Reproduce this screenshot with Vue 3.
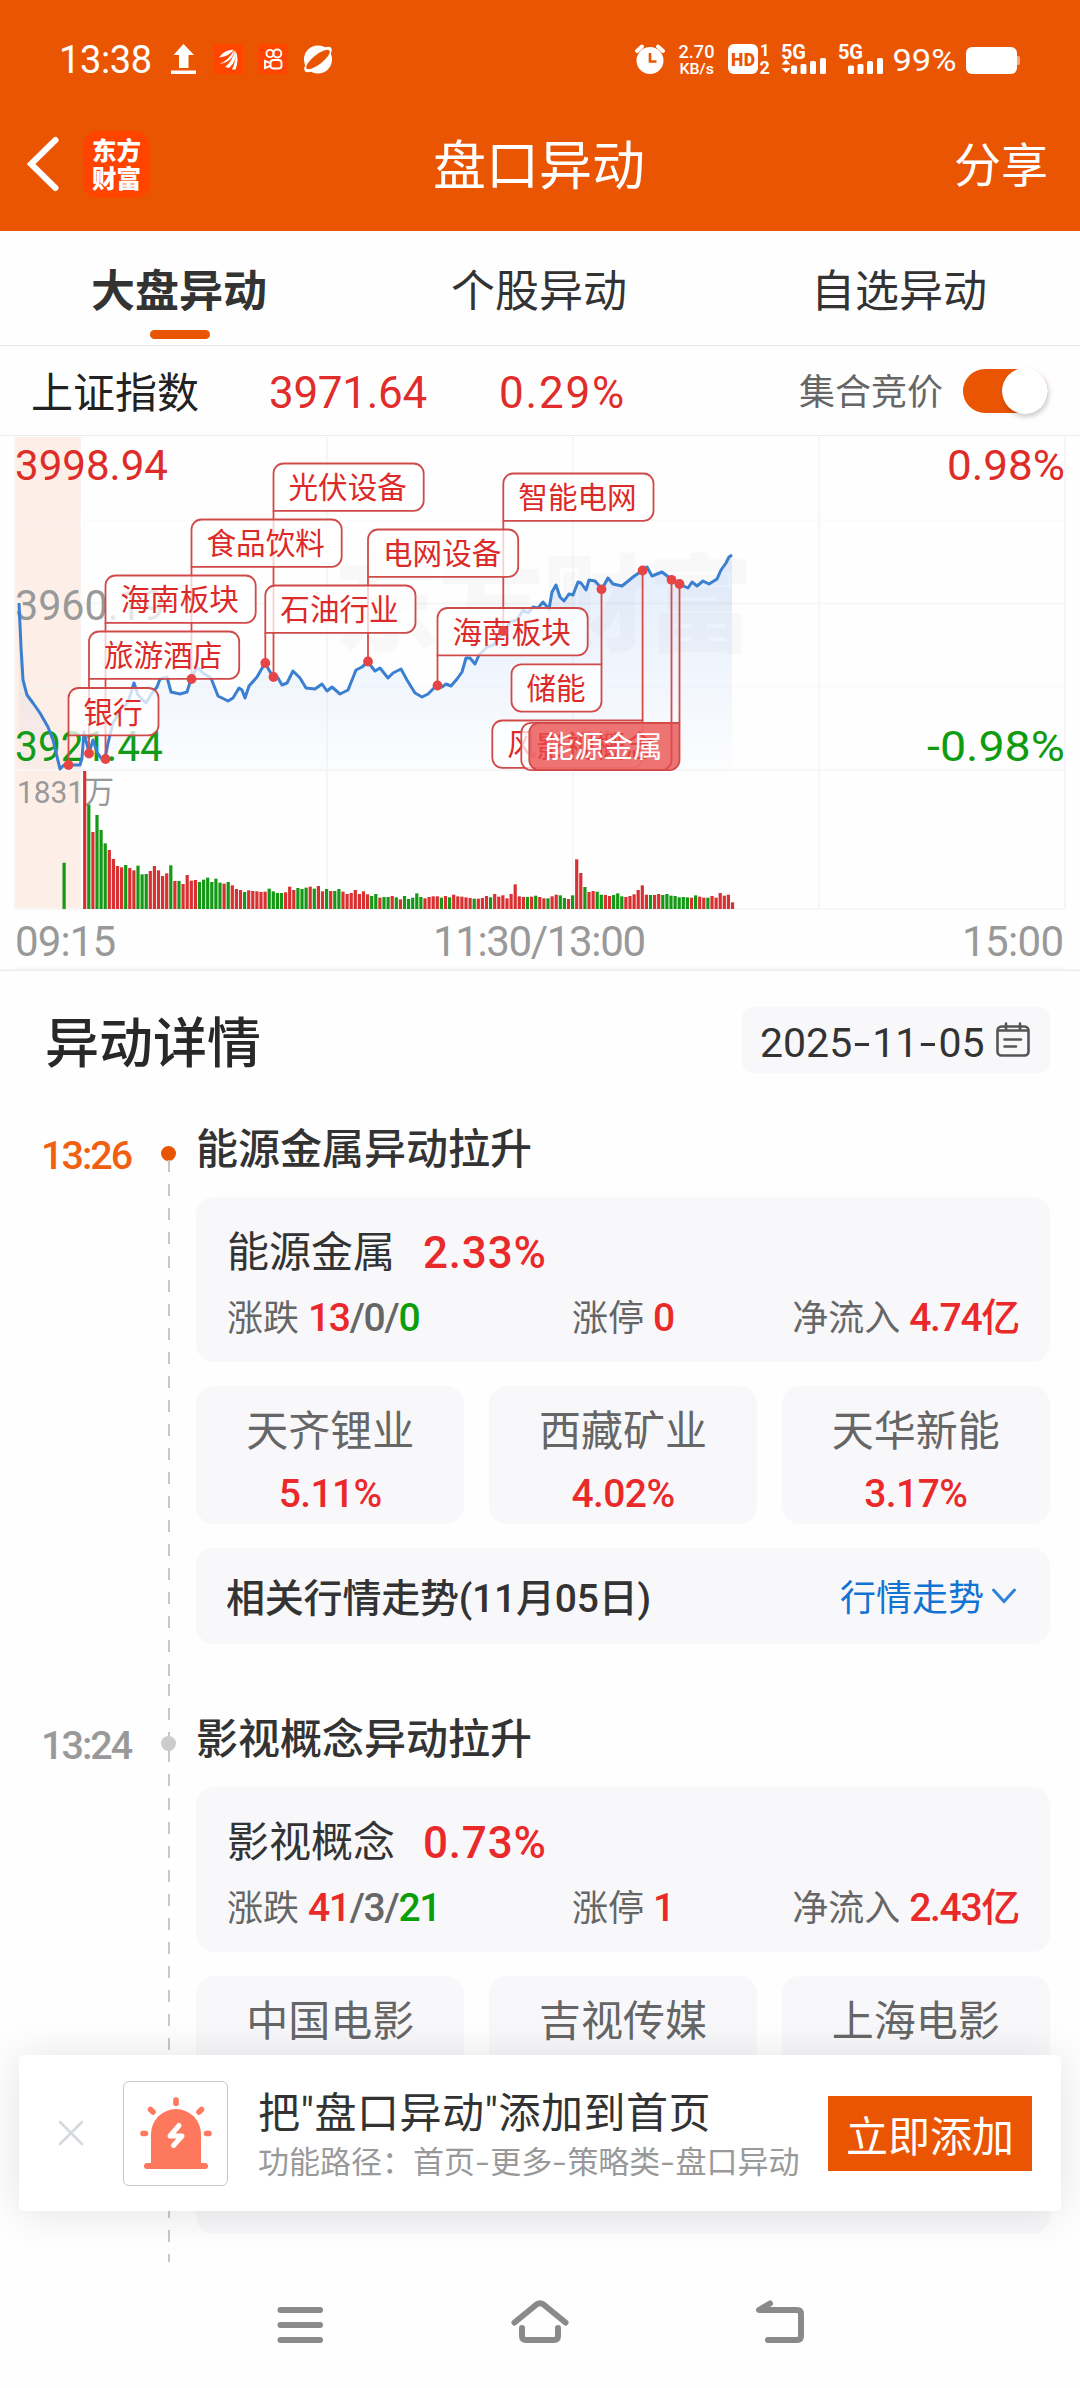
<script setup>
const line = '19,603 21,647 23,680 27,695 33,703 40,713 48,727 53,740 60,769 64,765 68,765 80,765 82,758 84,732 89,753 93,740 97,752 101,758 105,759 108,743 113,723 122,708 128,702 134,683 138,695 146,703 152,693 157,687 160,679 167,677 171,692 180,694 187,692 191,679 197,667 203,673 211,678 218,696 228,701 233,698 239,688 242,690 245,698 249,686 257,677 265,663 273,677 278,678 282,685 287,683 293,671 300,678 306,688 315,689 322,684 327,691 332,687 340,694 348,690 356,670 362,667 368,662 375,671 380,668 388,678 393,673 401,669 407,680 415,693 422,697 428,694 437,685 442,687 446,684 451,686 457,679 462,672 466,658 470,658 475,664 479,655 487,647 493,645 503,633 510,622 517,620 523,610 528,613 533,607 538,608 543,602 549,609 552,592 556,585 560,597 564,601 569,594 573,595 578,582 581,583 586,590 589,580 595,581 602,589 608,578 613,584 622,586 627,582 633,577 643,570 647,567 652,576 662,572 671,579 679,584 688,588 692,582 697,586 703,581 709,584 717,579 721,570 726,563 729,557 732,555'

// Volume series: direction letter + distance (thirds of a pixel) from the panel top
const volume = 'R33 G134 R216 G165 G210 G250 R270 R297 R318 R322 G315 R324 R331 G317 G343 G342 R333 R318 R331 R348 R340 G316 R363 G363 R372 R345 R362 R360 G366 G359 G353 G366 G356 G368 R371 G366 R376 R387 R390 G396 R391 R393 R394 R396 R395 G386 G394 G399 G399 R397 R380 R390 G384 G387 G383 R380 G386 R378 R394 G387 R393 G393 G387 R395 R402 R399 R390 R402 R394 R403 G408 G402 R413 G411 G411 R408 G412 R418 G408 G417 G413 G400 G411 R415 R411 R409 R409 G413 R408 G412 R404 R409 R410 R412 R414 G416 R416 R414 R408 G412 R402 R410 R406 R415 R402 R373 R409 R411 G411 R410 G407 R411 R415 G415 R409 R404 G406 G414 R417 G406 R298 R339 G381 R396 R393 G395 G404 R405 R408 G405 G400 G409 R411 R408 R403 R390 R376 R404 G405 R405 R402 G405 G402 G407 G408 G412 G411 G412 R413 G406 R410 R413 G413 R408 R413 R399 R407 R404 R427'
const bars = volume.split(' ').map((s, i) => ({
  up: s[0] === 'R',
  x: 83.1 + i * 4.1,
  y: 760 + Number(s.slice(1)) / 3,
  h: (447 - Number(s.slice(1))) / 3,
}))

const R = 10
const flags = [
  { t: '光伏设备', x: 273.5, y: 463.5, px: 273.5, py: 677 },
  { t: '食品饮料', x: 191.5, y: 519.5, px: 191.5, py: 679 },
  { t: '海南板块', x: 105.5, y: 575.5, px: 105.5, py: 759 },
  { t: '旅游酒店', x: 89, y: 631.5, px: 89, py: 753.5 },
  { t: '银行', x: 68.5, y: 688, px: 68.5, py: 765 },
  { t: '智能电网', x: 503.3, y: 473.5, px: 503.3, py: 631 },
  { t: '电网设备', x: 368, y: 529.5, px: 368, py: 661.5 },
  { t: '石油行业', x: 265.3, y: 585.5, px: 265.3, py: 663 },
  { t: '海南板块', x: 437.5, y: 608, px: 437.5, py: 685.5 },
  { t: '储能', x: 511.5, y: 664.3, px: 601.5, py: 589.3, right: true },
  { t: '风电设备', x: 492.3, y: 720.5, px: 642.6, py: 570.5, right: true },
  { t: '影视概念', x: 521.3, y: 722.8, px: 671.5, py: 579.8, right: true },
  { t: '能源金属', x: 529.3, y: 722.8, px: 679.5, py: 584, right: true, active: true },
].map((f) => {
  const w = f.t.length === 2 ? 90 : 150.2
  const h = 47.3
  const { x, y } = f
  const box = f.right
    ? `M${x + R} ${y}H${x + w}V${y + h - R}a${R} ${R} 0 0 1 ${-R} ${R}H${x + R}a${R} ${R} 0 0 1 ${-R} ${-R}V${y + R}a${R} ${R} 0 0 1 ${R} ${-R}Z`
    : `M${x + R} ${y}H${x + w - R}a${R} ${R} 0 0 1 ${R} ${R}V${y + h - R}a${R} ${R} 0 0 1 ${-R} ${R}H${x}V${y + R}a${R} ${R} 0 0 1 ${R} ${-R}Z`
  return { ...f, w, h, box }
})

const events = [
  {
    time: '13:26', title: '能源金属异动拉升', sector: '能源金属', pct: '2.33%',
    up: 13, flat: 0, down: 0, limit: 0, inflow: '4.74亿',
    stocks: [['天齐锂业', '5.11%'], ['西藏矿业', '4.02%'], ['天华新能', '3.17%']],
    trend: '相关行情走势(11月05日)', active: true,
  },
  {
    time: '13:24', title: '影视概念异动拉升', sector: '影视概念', pct: '0.73%',
    up: 41, flat: 3, down: 21, limit: 1, inflow: '2.43亿',
    stocks: [['中国电影', ''], ['吉视传媒', ''], ['上海电影', '']],
    trend: '',
  },
]
</script>

<template>
  <div class="page">
    <header class="header">
      <div class="status">
        <span class="clock">13:38</span>
        <svg class="st-icons" width="164" height="32" viewBox="170 43 164 32">
          <path d="M183.500 44l10.500 11h-5.500v13h-9.500V55h-5.500zM171 70.500h25V74h-25z" fill="#fff" />
          <rect x="213" y="44" width="30" height="30" fill="#ff4500" />
          <path d="M219 57.500q5-7.500 14.500-8q-3 6.500-14.500 8zM219.500 64q9.500-4 14.500-14q0 11.500-14.500 14zM225 67q8-6.500 10-17q2.500 11.500-6 18zM232 69.500q4.500-9 3.500-19q4 9 0 19z" fill="#fff" />
          <rect x="258" y="44" width="30" height="30" rx="3" fill="#ff4500" />
          <g fill="none" stroke="#fff" stroke-width="1.900">
            <circle cx="270" cy="53.500" r="3.600" />
            <circle cx="277.300" cy="53.500" r="4" />
            <rect x="270.500" y="60" width="11" height="8.500" rx="3" />
            <path d="M270 63l-5-2v7l5-2" />
          </g>
          <circle cx="318" cy="59.500" r="14" fill="#fff" />
          <ellipse cx="318" cy="59.500" rx="17.500" ry="6.500" transform="rotate(-42 318 59.500)" fill="#fff" />
          <ellipse cx="318" cy="59.500" rx="14.500" ry="4.800" transform="rotate(-38 318 59.500)" fill="#ea5504" />
        </svg>
        <span class="grow"></span>
        <svg class="st-right" width="390" height="34" viewBox="634 42 390 34">
          <circle cx="650" cy="60.500" r="13.500" fill="#fff" />
          <path d="M637 51l5-4.500M663 51l-5-4.500" stroke="#fff" stroke-width="4" stroke-linecap="round" />
          <path d="M650 53v8.500h6.500" fill="none" stroke="#ea5504" stroke-width="2.600" />
          <g fill="#fff">
            <text x="678.500" y="58" font-size="19" textLength="36" lengthAdjust="spacingAndGlyphs" font-weight="500">2.70</text>
            <text x="679.500" y="74" font-size="15.500" textLength="34.500" lengthAdjust="spacingAndGlyphs" font-weight="500">KB/s</text>
            <rect x="728" y="44" width="30" height="30" rx="6" />
            <text x="760" y="56" font-size="16.500" font-weight="700">1</text>
            <text x="759.500" y="74" font-size="18" font-weight="700">2</text>
            <text x="781" y="58.500" font-size="20" textLength="25" font-weight="700">5G</text>
            <text x="838" y="58.500" font-size="20" textLength="25" font-weight="700">5G</text>
            <path d="M786 59.500l4.500 5h-9zM786 73l4.500-5h-9z" />
            <rect x="791" y="65.500" width="6" height="8.500" rx="1.500" />
            <rect x="800.500" y="64" width="6" height="10" rx="1.500" />
            <rect x="810" y="61" width="6" height="13" rx="1.500" />
            <rect x="820" y="58" width="6" height="16" rx="1.500" />
            <rect x="848" y="65.500" width="6" height="8.500" rx="1.500" />
            <rect x="857.500" y="64" width="6" height="10" rx="1.500" />
            <rect x="867" y="61" width="6" height="13" rx="1.500" />
            <rect x="877" y="58" width="6" height="16" rx="1.500" />
            <text x="892.500" y="71" font-size="31.500" textLength="64" lengthAdjust="spacingAndGlyphs">99%</text>
            <rect x="966" y="47" width="51" height="27" rx="6" />
            <path d="M1017 56h1.500q1.500 0 1.500 1.500v6q0 1.500-1.500 1.500h-1.500z" opacity=".5" />
          </g>
          <text x="731" y="65.500" font-size="17.500" font-weight="900" fill="#ea5504" textLength="24">HD</text>
        </svg>
      </div>
      <div class="navbar">
        <svg class="back" width="36" height="60" viewBox="0 0 36 60"><path d="M30.500 6L6 30l24.500 24" fill="none" stroke="#fff" stroke-width="6" stroke-linecap="round" stroke-linejoin="miter" /></svg>
        <div class="logo"><span>东方</span><span>财富</span></div>
        <h1>盘口异动</h1>
        <span class="share">分享</span>
      </div>
    </header>

    <nav class="tabs">
      <div class="tab on">大盘异动</div>
      <div class="tab">个股异动</div>
      <div class="tab">自选异动</div>
    </nav>

    <div class="index">
      <span class="iname">上证指数</span>
      <span class="ival">3971.64</span>
      <span class="ipct">0.29%</span>
      <span class="grow"></span>
      <span class="auction">集合竞价</span>
      <div class="toggle"><i></i></div>
    </div>

    <svg class="chart" width="1080" height="535" viewBox="0 436 1080 535">
      <defs>
        <linearGradient id="area" x1="0" y1="555" x2="0" y2="770" gradientUnits="userSpaceOnUse">
          <stop offset="0" stop-color="#4a90f0" stop-opacity=".15" />
          <stop offset="1" stop-color="#4a90f0" stop-opacity=".015" />
        </linearGradient>
      </defs>
      <rect x="16" y="437" width="64.700" height="332" fill="#fdeee7" />
      <rect x="16" y="771" width="64.700" height="137" fill="#fdeee7" />
      <g stroke="#f6f6f8" stroke-width="2">
        <path d="M15 436V909M327 437V909M573 437V909M819 437V909M1065 436V909M15 603.500H1065M15 770H1065M15 909H1065" fill="none" />
        <path d="M15 520.300H1065M15 686.700H1065" stroke-dasharray="2 2" stroke-width="1.500" />
      </g>
      <text class="mark" x="333" y="643" font-size="106" textLength="420">东方财富</text>
      <g class="axis">
        <text x="15" y="480" fill="#de2c29" textLength="153" lengthAdjust="spacingAndGlyphs">3998.94</text>
        <text x="15" y="620" fill="#999" textLength="150" lengthAdjust="spacingAndGlyphs">3960.19</text>
        <text x="15" y="760.500" fill="#109c10" textLength="148" lengthAdjust="spacingAndGlyphs">3921.44</text>
        <text x="947" y="480" fill="#de2c29" textLength="118" lengthAdjust="spacingAndGlyphs">0.98%</text>
        <text x="927" y="760.500" fill="#109c10" textLength="138" lengthAdjust="spacingAndGlyphs">-0.98%</text>
      </g>
      <text x="17" y="803" font-size="32" fill="#999" textLength="97" lengthAdjust="spacingAndGlyphs">1831万</text>
      <polygon :points="line + ' 732,769 19,769'" fill="url(#area)" />
      <polyline :points="line" fill="none" stroke="#3a7fd0" stroke-width="3" stroke-linejoin="round" />
      <rect x="62.500" y="862.700" width="3.200" height="46.300" fill="#159815" />
      <rect v-for="(b, i) in bars" :key="i" :x="b.x" :y="b.y" width="3.200" :height="b.h" :fill="b.up ? '#d93131' : '#159815'" />
      <path v-for="(f, i) in flags" :key="'s' + i" :d="`M${f.px} ${f.y + (f.right ? 0 : f.h)}V${f.py}`" stroke="#d84a48" stroke-width="1.800" />
      <g v-for="(f, i) in flags" :key="'f' + i" class="flag" :class="{ active: f.active }">
        <path :d="f.box" />
        <text :x="f.x + 15" :y="f.y + 34.5">{{ f.t }}</text>
      </g>
      <circle v-for="(f, i) in flags" :key="'d' + i" :cx="f.px" :cy="f.py" r="4.900" fill="#e64545" />
      <g class="axis" fill="#999">
        <text x="15" y="956" textLength="101">09:15</text>
        <text x="433" y="956" textLength="213">11:30/13:00</text>
        <text x="962" y="956" textLength="102">15:00</text>
      </g>
      <path d="M0 970.300H1080" stroke="#ebebeb" stroke-width="1.500" />
      <path d="M15 968.500H1065" stroke="#f6f6f8" stroke-width="2" />
    </svg>

    <main class="main">
      <div class="dhead">
        <h2>异动详情</h2>
        <div class="date">
          <span>2025<i class="dash">-</i>11<i class="dash">-</i>05</span>
          <svg width="34" height="36" viewBox="0 0 34 36" fill="none" stroke="#555" stroke-width="2.600" stroke-linecap="round">
            <rect x="1.500" y="4.500" width="31" height="29" rx="4" />
            <path d="M2 8.500H32M10 1.500V8M24 1.500V8M8.500 17.500H25M8.500 24.500H20" />
          </svg>
        </div>
      </div>
      <section v-for="(e, i) in events" :key="e.time" class="event" :class="{ active: e.active }">
        <div class="time">{{ e.time }}</div>
        <div class="rail"><i class="lead" :class="{ none: i === 0 }"></i><b></b><i class="tail"></i></div>
        <div class="body">
          <h3>{{ e.title }}</h3>
          <div class="card sector">
            <div class="srow"><span>{{ e.sector }}</span><em>{{ e.pct }}</em></div>
            <div class="stats">
              <div>涨跌 <b><u>{{ e.up }}</u>/{{ e.flat }}/<s>{{ e.down }}</s></b></div>
              <div>涨停 <b><u>{{ e.limit }}</u></b></div>
              <div>净流入 <b><u>{{ e.inflow }}</u></b></div>
            </div>
          </div>
          <div class="stocks">
            <div v-for="s in e.stocks" :key="s[0]" class="card stock">
              <span>{{ s[0] }}</span><em>{{ s[1] }}</em>
            </div>
          </div>
          <div class="card trend">
            <template v-if="e.trend">
              <strong>{{ e.trend }}</strong>
              <span>行情走势</span>
              <svg width="26" height="18" viewBox="0 0 26 18"><path d="M2.500 3L13 14.500L23.500 3" fill="none" stroke="#2f82da" stroke-width="3" stroke-linecap="round" /></svg>
            </template>
          </div>
        </div>
      </section>
    </main>

    <aside class="toast">
      <svg class="close" width="26" height="26" viewBox="0 0 26 26"><path d="M2 2L24 24M24 2L2 24" stroke="#d5d8de" stroke-width="2.500" stroke-linecap="round" /></svg>
      <div class="alarm">
        <svg width="74" height="72" viewBox="0 0 74 72">
          <path d="M12 66V37a25 25 0 0 1 50 0V66Z" fill="#fd785c" />
          <g stroke="#fd785c" stroke-width="6" stroke-linecap="round">
            <path d="M8 69H66" />
          </g>
          <path d="M37 6.500V3M14 15l-2.500-2.500M60 15l2.500-2.500M6.500 36.500H4M67.500 36.500h2.500" stroke="#fd785c" stroke-width="5.600" stroke-linecap="round" />
          <path d="M40 28.500L31 39h12L34.500 48.500" fill="none" stroke="#fff" stroke-width="5" stroke-linecap="round" stroke-linejoin="round" />
        </svg>
      </div>
      <div class="ttext">
        <p>把"盘口异动"添加到首页</p>
        <small>功能路径：首页<i class="dash">-</i>更多<i class="dash">-</i>策略类<i class="dash">-</i>盘口异动</small>
      </div>
      <button>立即添加</button>
    </aside>

    <footer class="sysnav">
      <svg width="530" height="46" viewBox="276 2300 530 46" fill="none" stroke="#8a8a8a" stroke-width="6" stroke-linecap="round" stroke-linejoin="round">
        <path d="M280.500 2310H320M280.500 2325H320M280.500 2340H320" />
        <path d="M514.500 2322.500L536.500 2304.500Q540 2302 543.500 2304.500L565.500 2322.500M522 2328V2336Q522 2340 526 2340H554Q558 2340 558 2336V2328" />
        <path d="M770 2303.500L759 2310H797Q801 2310 801 2314V2336Q801 2340 797 2340H768" />
      </svg>
    </footer>
  </div>
</template>

<style>
body {
  margin: 0;
  background: #fff;
}
</style>

<style scoped>
.page {
  position: relative;
  display: flex;
  flex-direction: column;
  width: 1080px;
  height: 2388px;
  overflow: hidden;
  background: #fefefe;
  color: #333;
  font-family: Roboto, "Noto Sans CJK SC", sans-serif;
}
h1, h2, h3, p { margin: 0; font-weight: 400; }
em, i, u, s { font-style: normal; text-decoration: none; }
.grow { flex: 1; }
.dash {
  display: inline-block;
  width: 0.49em;
  text-align: center;
  transform: scaleX(1.45);
}
.header {
  flex: none;
  height: 231px;
  background: #ea5504;
  color: #fff;
}
.status {
  display: flex;
  align-items: center;
  height: 118px;
  padding: 0 56px 0 59px;
}
.clock { width: 111px; padding-top: 2px; font-size: 38px; letter-spacing: -0.4px; }
.navbar {
  display: flex;
  align-items: center;
  height: 92px;
  padding: 0 32px 0 25px;
}
.logo {
  display: flex;
  flex-direction: column;
  justify-content: center;
  align-items: center;
  width: 67px;
  height: 67px;
  margin-left: 22px;
  border-radius: 15px;
  background: #ff4400;
  font: 900 24.500px/28px "Noto Sans CJK SC", sans-serif;
}
.navbar h1 {
  flex: 1;
  padding: 6px 26px 0 0;
  font-size: 53px;
  line-height: 86px;
  text-align: center;
}
.navbar .share { padding-top: 4px; font-size: 47px; line-height: 88px; }
.tabs {
  display: flex;
  flex: none;
  height: 114px;
  border-bottom: 1px solid #e4e4e4;
}
.tab {
  position: relative;
  flex: 1;
  padding-right: 2px;
  font-size: 44px;
  line-height: 122px;
  text-align: center;
}
.tab.on { font-weight: 700; }
.tab.on::after {
  content: "";
  position: absolute;
  left: 150px;
  top: 99px;
  width: 60px;
  height: 9px;
  border-radius: 5px;
  background: #ea5504;
}
.index {
  display: flex;
  flex: none;
  align-items: center;
  box-sizing: border-box;
  height: 90px;
  padding: 0 32px 0 31px;
  border-bottom: 1px solid #ebebeb;
}
.index span { padding-top: 6px; line-height: 83px; }
.iname { width: 238px; font-size: 42px; color: #222; }
.ival, .ipct { font-size: 44px; color: #e02c2a; }
.ival { width: 230px; letter-spacing: -0.3px; }
.ipct { letter-spacing: 1.8px; }
.auction { font-size: 36px; color: #666; }
.toggle {
  box-sizing: border-box;
  width: 85px;
  height: 44px;
  margin-left: 20px;
  padding-left: 39px;
  border-radius: 22px;
  background: #ea5504;
}
.toggle i {
  display: block;
  width: 46px;
  height: 46px;
  margin-top: -1px;
  border-radius: 50%;
  background: #fff;
  box-shadow: 1px 3px 5px rgba(0, 0, 0, 0.2);
}
.chart { display: block; flex: none; }
.axis text { font-size: 42px; font-family: Roboto, sans-serif; }
.mark {
  font-family: "Noto Sans CJK SC", sans-serif;
  font-weight: 900;
  fill: rgba(0, 0, 0, 0.025);
}
.flag path { fill: rgba(255, 255, 255, 0.75); stroke: #cf4a48; stroke-width: 1.800; }
.flag text { font: 29.600px "Noto Sans CJK SC", sans-serif; fill: #dc2a28; }
.flag.active path { fill: rgba(232, 72, 72, 0.76); }
.flag.active text { fill: #fff; }
.main { flex: 1; min-height: 0; overflow: hidden; }
.dhead {
  display: flex;
  justify-content: space-between;
  align-items: center;
  height: 66px;
  padding: 36px 30px 21px 45px;
}
.dhead h2 { padding-top: 9px; font-size: 54px; font-weight: 500; color: #282828; line-height: 57px; }
.date {
  display: flex;
  align-items: center;
  justify-content: space-between;
  box-sizing: border-box;
  width: 308px;
  height: 66px;
  padding: 0 20px 0 18px;
  border-radius: 10px;
  background: #f8f8fb;
  font-size: 41px;
}
.date span { padding-top: 6px; }
.event {
  display: grid;
  grid-template-columns: 161px 15px 874px;
  height: 590px;
}
.time {
  padding: 37px 0 0 41px;
  font-size: 39.500px;
  line-height: 50px;
  font-weight: 500;
  letter-spacing: -2px;
  color: #999;
}
.active .time { color: #f06010; }
.rail { display: flex; flex-direction: column; align-items: center; }
.rail i {
  width: 2px;
  background: repeating-linear-gradient(#c8c8c8 0 12px, transparent 12px 24px);
}
.rail .lead { height: 52px; }
.rail .lead.none { background: none; }
.rail b { width: 15px; height: 15px; border-radius: 50%; background: #ccc; }
.active .rail b { background: #ea5504; }
.rail .tail { flex: 1; margin-top: -1px; }
.body { padding-left: 20px; }
.body h3 {
  height: 103px;
  font-size: 42px;
  line-height: 112px;
  font-weight: 500;
}
.card { box-sizing: border-box; border-radius: 18px; background: #f8f8fb; }
.sector { height: 165px; padding: 28px 31px 0; }
.srow { display: flex; gap: 28px; font-size: 42px; line-height: 56px; }
.srow em { font-size: 44px; font-weight: 500; letter-spacing: 0.8px; color: #ea2a2a; }
.stats {
  display: grid;
  grid-template-columns: 1fr 1fr 1fr;
  margin-top: 9px;
  font-size: 36px;
  line-height: 56px;
  color: #666;
}
.stats div:nth-child(2) { text-align: center; }
.stats div:nth-child(3) { text-align: right; }
.stats b { font-size: 39px; font-weight: 500; letter-spacing: -1.3px; }
.stats u { color: #ea2a2a; }
.stats s { color: #0a9e0a; }
.stocks { display: grid; grid-template-columns: 1fr 1fr 1fr; gap: 24.500px; margin-top: 24px; }
.stock {
  display: flex;
  flex-direction: column;
  align-items: center;
  height: 138px;
  padding-top: 14px;
  font-size: 42px;
  line-height: 63px;
  color: #666;
}
.stock em { font-size: 39px; font-weight: 500; letter-spacing: -0.6px; color: #ea2a2a; }
.trend {
  display: flex;
  align-items: center;
  height: 96px;
  margin-top: 24px;
  padding: 0 33px 0 30px;
}
.trend strong { flex: 1; padding-top: 6px; font-size: 39px; line-height: 90px; font-weight: 500; letter-spacing: -0.2px; }
.trend span { padding-top: 6px; font-size: 36px; line-height: 90px; color: #1273d3; }
.trend svg { margin-left: 7px; }
.toast {
  position: absolute;
  left: 19px;
  top: 2055px;
  display: flex;
  align-items: center;
  box-sizing: border-box;
  width: 1042px;
  height: 156px;
  padding: 0 29px 0 39px;
  border-radius: 5px;
  background: #fff;
  box-shadow: 0 2px 44px rgba(0, 0, 0, 0.11);
}
.alarm {
  display: flex;
  align-items: center;
  justify-content: center;
  box-sizing: border-box;
  width: 105px;
  height: 105px;
  margin-left: 39px;
  border: 1px solid #c8c8c8;
  border-radius: 6px;
}
.ttext { flex: 1; margin-left: 30px; padding-top: 6px; white-space: nowrap; }
.ttext p { font-size: 42px; line-height: 54px; letter-spacing: 0.5px; }
.ttext small { display: block; font-size: 31px; line-height: 44px; color: #999; }
.toast button {
  width: 204px;
  height: 75px;
  padding: 0;
  border: 0;
  background: #ea5504;
  color: #fff;
  font: 42px/73px "Noto Sans CJK SC", sans-serif;
}
.sysnav {
  display: flex;
  flex: none;
  box-sizing: border-box;
  height: 126px;
  padding: 38px 0 0 276px;
}
</style>
